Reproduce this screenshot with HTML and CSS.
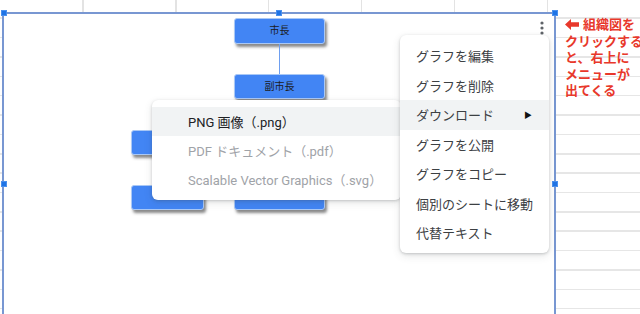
FILE: index.html
```html
<!DOCTYPE html>
<html lang="ja">
<head>
<meta charset="utf-8">
<title>組織図メニュー</title>
<link rel="stylesheet" href="styles.css">
</head>
<body>
<div class="sheet">
  <div class="chart">
    <div class="node n-mayor">市長</div>
    <div class="link"></div>
    <div class="node n-deputy">副市長</div>
    <div class="node n-r3l"></div>
    <div class="node n-r3r"></div>
    <div class="node n-r4l"></div>
    <div class="node n-r4r"></div>
    <svg class="kebab" width="6" height="16" viewBox="0 0 6 16" aria-hidden="true">
      <circle cx="3" cy="3" r="1.6"/>
      <circle cx="3" cy="8" r="1.6"/>
      <circle cx="3" cy="13" r="1.6"/>
    </svg>
  </div>

  <span class="handle h-tl"></span>
  <span class="handle h-tm"></span>
  <span class="handle h-tr"></span>
  <span class="handle h-ml"></span>
  <span class="handle h-mr"></span>

  <ul class="submenu">
    <li class="item active">PNG 画像（.png）</li>
    <li class="item disabled">PDF ドキュメント（.pdf）</li>
    <li class="item disabled">Scalable Vector Graphics（.svg）</li>
  </ul>

  <ul class="menu">
    <li class="item">グラフを編集</li>
    <li class="item">グラフを削除</li>
    <li class="item active">ダウンロード<span class="caret">&#9654;</span></li>
    <li class="item">グラフを公開</li>
    <li class="item">グラフをコピー</li>
    <li class="item">個別のシートに移動</li>
    <li class="item">代替テキスト</li>
  </ul>

  <div class="note">
    <div class="note-line"><svg class="arrow" width="14" height="11" viewBox="0 0 14 11" aria-hidden="true"><path d="M0 5.5 L6 0 V3.3 H14 V7.7 H6 V11 Z"/></svg>組織図を</div>
    <div class="note-line">クリックする</div>
    <div class="note-line">と、右上に</div>
    <div class="note-line">メニューが</div>
    <div class="note-line">出てくる</div>
  </div>
</div>
</body>
</html>
```

FILE: styles.css
```css
* { box-sizing: border-box; }

html, body {
  margin: 0;
  padding: 0;
  background: #ffffff;
}

body {
  width: 640px;
  height: 314px;
  overflow: hidden;
  font-family: Roboto, "Noto Sans CJK JP", sans-serif;
}

.sheet {
  position: relative;
  width: 640px;
  height: 314px;
  overflow: hidden;
  background-color: #ffffff;
  background-image:
    repeating-linear-gradient(to bottom, transparent 0, transparent 17.5px, #e6e6e6 17.5px, #e6e6e6 19px, transparent 19px, transparent 19.36px),
    repeating-linear-gradient(to right, transparent 0, transparent 82px, #e3e3e3 82px, #e3e3e3 83.5px, transparent 83.5px, transparent 93px);
}

/* chart object */
.chart {
  position: absolute;
  left: 2px;
  top: 12px;
  width: 554px;
  height: 330px;
  background: #ffffff;
  border: 2px solid #7897d2;
}

.node {
  position: absolute;
  display: flex;
  align-items: center;
  justify-content: center;
  background: #4285f4;
  border: 1px solid #a9c8f6;
  border-radius: 3px;
  box-shadow: 2px 3px 3px rgba(40, 40, 40, 0.55);
  color: #1b1b1b;
  font-size: 10px;
  line-height: 1;
}

/* node positions inside the chart (chart origin = page 4,14) */
.n-mayor  { left: 230px; top: 4px;   width: 91px; height: 26px; }
.n-deputy { left: 230px; top: 60px;  width: 91px; height: 25px; }
.n-r3l    { left: 127px; top: 116px; width: 73px; height: 25px; }
.n-r3r    { left: 230px; top: 116px; width: 91px; height: 25px; }
.n-r4l    { left: 127px; top: 171px; width: 73px; height: 25px; }
.n-r4r    { left: 230px; top: 171px; width: 91px; height: 25px; }

.link {
  position: absolute;
  left: 275px;
  top: 30px;
  width: 1px;
  height: 30px;
  background: #6e9ff0;
}

.kebab {
  position: absolute;
  left: 535px;
  top: 6px;
  fill: #5f6368;
}

/* selection handles */
.handle {
  position: absolute;
  width: 6px;
  height: 6px;
  background: #1f74e6;
  border: 1px solid #4a90ee;
}
.h-tl { left: 1px;   top: 10px; }
.h-tm { left: 276px; top: 10px; }
.h-tr { left: 552px; top: 10px; }
.h-ml { left: 1px;   top: 181px; }
.h-mr { left: 552px; top: 181px; }

/* menus */
.menu, .submenu {
  position: absolute;
  margin: 0;
  list-style: none;
  background: #ffffff;
  border-radius: 6px;
  box-shadow: 0 1px 3px rgba(60, 64, 67, 0.25), 0 3px 9px rgba(60, 64, 67, 0.12);
  font-size: 13px;
  color: #3c4043;
}

.menu {
  left: 400px;
  top: 35px;
  width: 149px;
  height: 218px;
  padding: 6px 0 5px;
  z-index: 3;
}

.menu .item {
  display: flex;
  align-items: center;
  height: 29.5px;
  padding: 0 16px;
  white-space: nowrap;
}

.item.active {
  background: #f1f3f4;
}

.caret {
  margin-left: auto;
  padding-right: 0;
  font-size: 8px;
  color: #111111;
  transform: translateX(-1px);
}

.submenu {
  left: 152px;
  top: 100px;
  width: 249px;
  height: 100px;
  padding: 7px 0 6px;
  z-index: 2;
}

.submenu .item {
  display: flex;
  align-items: center;
  height: 29px;
  padding: 0 12px 0 36px;
  white-space: nowrap;
  color: #202124;
}

.submenu .item.disabled {
  color: #9fa3a8;
}

/* annotation */
.note {
  position: absolute;
  left: 565px;
  top: 16px;
  z-index: 4;
  color: #e8382b;
  font-family: "Noto Sans CJK JP", sans-serif;
  font-weight: 700;
  font-size: 13px;
  line-height: 16.5px;
  white-space: nowrap;
}

.note-line {
  display: flex;
  align-items: center;
}

.arrow {
  fill: #e8382b;
  margin-right: 4px;
}
```
